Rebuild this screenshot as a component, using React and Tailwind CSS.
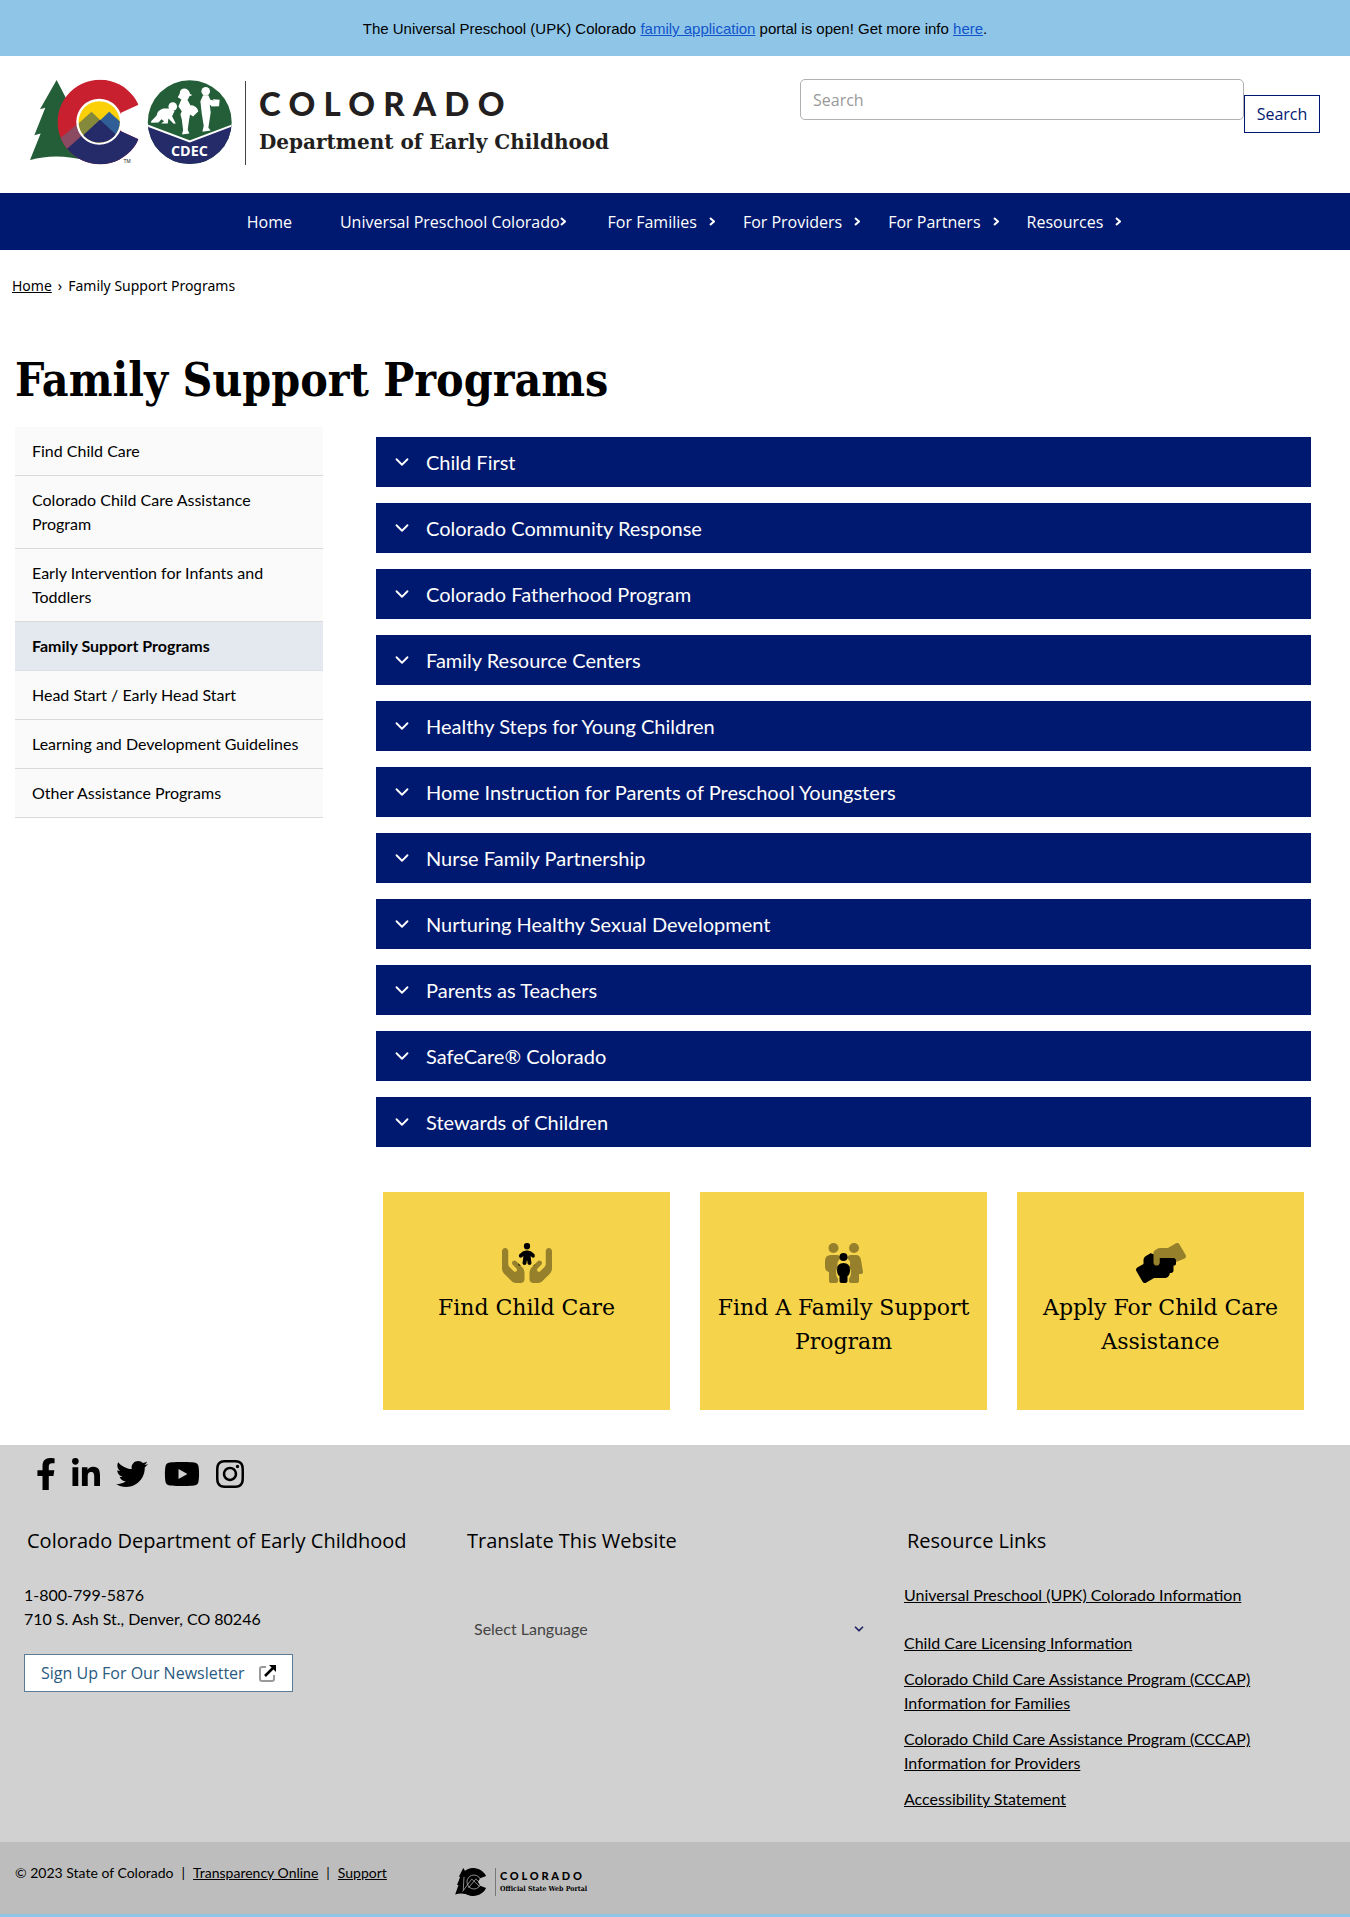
import React from "react";
import { ChevronDown } from "lucide-react";
import {
  FaFacebookF,
  FaLinkedinIn,
  FaTwitter,
  FaYoutube,
  FaInstagram,
} from "react-icons/fa";
import { FaHandsHoldingChild } from "react-icons/fa6";

const NAV = [
  { label: "Home", menu: false, className: "mr-12" },
  { label: "Universal Preschool Colorado", menu: true, className: "mr-[42px]" },
  { label: "For Families", menu: true, className: "mr-7 gap-3" },
  { label: "For Providers", menu: true, className: "mr-7 gap-3" },
  { label: "For Partners", menu: true, className: "mr-7 gap-3" },
  { label: "Resources", menu: true, className: "gap-3" },
];

const SIDEBAR = [
  "Find Child Care",
  "Colorado Child Care Assistance Program",
  "Early Intervention for Infants and Toddlers",
  "Family Support Programs",
  "Head Start / Early Head Start",
  "Learning and Development Guidelines",
  "Other Assistance Programs",
];

const PROGRAMS = [
  "Child First",
  "Colorado Community Response",
  "Colorado Fatherhood Program",
  "Family Resource Centers",
  "Healthy Steps for Young Children",
  "Home Instruction for Parents of Preschool Youngsters",
  "Nurse Family Partnership",
  "Nurturing Healthy Sexual Development",
  "Parents as Teachers",
  "SafeCare® Colorado",
  "Stewards of Children",
];

const SOCIAL = [
  { name: "Facebook", Icon: FaFacebookF, size: "w-5" },
  { name: "LinkedIn", Icon: FaLinkedinIn, size: "w-7" },
  { name: "Twitter", Icon: FaTwitter, size: "w-8" },
  { name: "YouTube", Icon: FaYoutube, size: "w-9" },
  { name: "Instagram", Icon: FaInstagram, size: "w-7" },
];

function StateLogo() {
  return (
    <svg viewBox="30 30 610 260" className="h-[87px] w-[203px] shrink-0" role="img" aria-label="Colorado CDEC logo">
      <defs>
        <clipPath id="c-shape">
          <path d="M356 107 A127 127 0 1 0 356 210 L305 187 L285 158 L305 130 Z" />
        </clipPath>
        <clipPath id="c-inner">
          <circle cx="238" cy="158" r="62" />
        </clipPath>
        <clipPath id="cdec-circle">
          <circle cx="510" cy="159" r="126" />
        </clipPath>
      </defs>
      <path d="M110 32 L60 120 L76 116 L43 198 L62 193 L30 273 Q110 250 205 276 L240 160 L150 110 Z" fill="#235e38" />
      <g clipPath="url(#c-shape)">
        <rect x="100" y="20" width="270" height="270" fill="#c8202f" />
        <path d="M215 130 L110 216 L140 244 L240 152 Z" fill="#8c4a62" />
        <path d="M240 152 L138 242 L160 300 L380 300 L380 170 L300 186 Z" fill="#252a68" />
      </g>
      <circle cx="238" cy="158" r="69" fill="#fff" />
      <g clipPath="url(#c-inner)">
        <rect x="170" y="90" width="140" height="140" fill="#fbd008" />
        <path d="M215 128 L160 176 L160 230 L240 230 L240 152 Z" fill="#85893c" />
        <path d="M268 128 L240 154 L260 230 L320 230 L320 175 Z" fill="#2f5f96" />
        <path d="M240 152 L155 230 L325 230 Z" fill="#252a68" />
      </g>
      <text x="311" y="283" fontFamily="Liberation Sans" fontSize="15" fill="#222">TM</text>
      <g clipPath="url(#cdec-circle)">
        <rect x="380" y="30" width="260" height="260" fill="#235e38" />
        <path d="M380 168 L510 218 L640 168 L640 290 L380 290 Z" fill="#252a68" />
        <path d="M380 168 L510 217 L640 168" fill="none" stroke="#fff" strokeWidth="6" />
      </g>
      <text x="509" y="261" textAnchor="middle" fontFamily="Open Sans" fontWeight="700" fontSize="43" fill="#fff">CDEC</text>
      <g fill="#fff">
        <circle cx="459" cy="112" r="13" />
        <path d="M452 118 L430 118 Q412 124 410 140 L394 156 L394 161 L416 160 L425 150 L433 156 L424 163 L444 163 L446 148 L462 164 L468 163 L457 141 L464 126 Z" />
        <path d="M480 73 Q480 58 495 58 Q508 60 511 74 L518 77 L508 82 Q506 94 496 94 L486 92 L474 84 Z" />
        <path d="M485 90 L503 92 L512 108 Q530 108 536 126 L520 142 L511 136 L508 152 L504 182 L509 193 L487 196 L490 182 L486 150 L482 136 L486 126 L476 112 Z" />
        <circle cx="558" cy="66" r="13" />
        <path d="M550 78 L566 78 L572 92 L582 94 L579 90 L600 92 L598 111 L576 112 L570 106 L573 130 L566 176 L573 184 L548 188 L552 170 L546 132 L542 96 Z" />
      </g>
    </svg>
  );
}

function PortalLogo() {
  return (
    <svg viewBox="0 0 86 76" className="h-[28px] w-[34px] shrink-0" aria-hidden="true">
      <path d="M22 0 L10 24 L14 24 L5 46 L9 46 L0 72 Q18 66 40 74 L50 40 L34 20 Z" />
      <path d="M84 22 A38 38 0 1 0 84 54 L68 48 L62 38 L68 28 Z" />
      <g fill="none" stroke="#bdbdbd" strokeWidth="2">
        <circle cx="51" cy="38" r="19" />
        <path d="M20 64 L45 30 L66 50 M36 54 L56 30 L70 42 M24 24 L22 60" />
      </g>
    </svg>
  );
}

function CareIcon() {
  return (
    <span className="relative block h-10 w-[50px]" aria-hidden="true">
      <FaHandsHoldingChild className="h-10 w-[50px] text-[#96802b]" />
      <FaHandsHoldingChild className="absolute inset-0 h-10 w-[50px] text-black [clip-path:polygon(34%_0,66%_0,66%_56%,34%_56%)]" />
    </span>
  );
}

function FamilyIcon() {
  return (
    <svg viewBox="0 0 38 40" className="h-10 w-[38px]" aria-hidden="true">
      <g fill="#96802b">
        <circle cx="8.500" cy="5" r="5" />
        <circle cx="29" cy="5" r="5" />
        <path d="M6 12 H12 Q15 12 16 15 Q11 19 13 24 Q9 30 13 36 V38 Q13 40 11 40 H6 Q4 40 4 38 V29 Q0 28 0 24 V18 Q0 12 6 12 Z" />
        <path d="M26 12 H31 Q35 12 36 17 L38 29 Q38 31 35 31 H34 V38 Q34 40 32 40 H26 Q24 40 24 38 V36 Q28 30 24 24 Q27 19 22 15 Q23 12 26 12 Z" />
      </g>
      <circle cx="18.500" cy="14" r="4" />
      <path d="M18.500 20 Q25 20 25 27 Q25 32 22.500 33 V38 Q22.500 40 20.500 40 H16.500 Q14.500 40 14.500 38 V33 Q12 32 12 27 Q12 20 18.500 20 Z" />
    </svg>
  );
}

function AssistIcon() {
  return (
    <svg viewBox="0 0 640 512" className="h-10 w-[50px]" aria-hidden="true">
      <path d="M488 192H336v56c0 39.700-32.300 72-72 72s-72-32.300-72-72V126.400l-64.900 39C107.800 176.900 96 197.800 96 220.200v47.300l-80 46.200C.7 322.500-4.600 342.100 4.300 357.400l80 138.600c8.800 15.300 28.400 20.500 43.700 11.700L231.400 448H368c35.300 0 64-28.700 64-64h16c17.700 0 32-14.300 32-32v-64h8c13.300 0 24-10.700 24-24v-48c0-13.300-10.700-24-24-24z" />
      <path d="M190 130 V330 H345 V185 Z" />
      <path
        fill="#96802b"
        d="M635.700 154.600L555.700 16C546.900.7 527.300-4.500 512 4.300L408.600 64H306.400c-12 0-23.700 3.400-33.900 9.700L239 94.600c-9.400 5.800-15 16.100-15 27.100V248c0 22.100 17.900 40 40 40s40-17.900 40-40v-56h184c13 0 24 11 24 24v28.500l112-46.200c15.300-8.900 20.500-28.400 11.700-43.700z"
      />
    </svg>
  );
}

const CARDS = [
  { title: "Find Child Care", Icon: CareIcon },
  { title: "Find A Family Support Program", Icon: FamilyIcon },
  { title: "Apply For Child Care Assistance", Icon: AssistIcon },
];

function SmallChevron({ className }) {
  return (
    <svg viewBox="0 0 6 9" className={className} fill="none" stroke="currentColor" strokeWidth="2" aria-hidden="true">
      <path d="M1 1 L5 4.500 L1 8" />
    </svg>
  );
}

export default function App() {
  return (
    <div className="bg-white font-['Lato',sans-serif] text-base text-black">
      <div className="bg-[#8fc6e8] pt-[18px] pb-[17px] text-center font-['Liberation_Sans',sans-serif] text-[15px] leading-[21px]">
        The Universal Preschool (UPK) Colorado{" "}
        <a href="#application" className="text-[#1155cc] underline">family application</a> portal is open! Get more info{" "}
        <a href="#info" className="text-[#1155cc] underline">here</a>.
      </div>

      <header className="flex items-start justify-between pt-[23px] pr-[30px] pb-[27px] pl-[30px]">
        <a href="#home" className="flex items-center text-[#231f20]">
          <StateLogo />
          <span className="ml-3 h-[84px] w-px bg-[#444]" />
          <span className="ml-[13px] block">
            <span className="block text-[33px] leading-[38px] font-black tracking-[0.25em]">COLORADO</span>
            <span className="block font-['DejaVu_Serif',serif] text-xl leading-10 font-bold">
              Department of Early Childhood
            </span>
          </span>
        </a>
        <form className="flex w-[520px] items-start font-['Open_Sans',sans-serif]">
          <input
            type="search"
            aria-label="Search"
            placeholder="Search"
            className="h-[41px] min-w-0 flex-1 rounded-[5px] border border-[#b0b0b0] px-3 text-base placeholder:text-[#999]"
          />
          <button type="button" className="mt-4 h-[38px] w-[76px] border border-[#001970] text-base text-[#001970]">
            Search
          </button>
        </form>
      </header>

      <nav className="flex h-[57px] items-center justify-center bg-[#001970] pl-[18px] font-['Open_Sans',sans-serif] text-white">
        {NAV.map(({ label, menu, className }) => (
          <a key={label} href="#nav" className={`flex items-center whitespace-nowrap ${className}`}>
            {label}
            {menu && <SmallChevron className="h-[9px] w-[6px]" />}
          </a>
        ))}
      </nav>

      <div className="flex gap-[6px] px-3 pt-[25px] font-['Noto_Sans',sans-serif] text-sm leading-[22px]">
        <a href="#home" className="underline">Home</a>
        <span>›</span>
        <span>Family Support Programs</span>
      </div>

      <main className="pr-[39px] pb-[35px] pl-[15px]">
        <h1 className="pt-[53px] font-['DejaVu_Serif_Condensed','DejaVu_Serif',serif] text-[46px] leading-[60px] font-bold">
          Family Support Programs
        </h1>
        <div className="mt-[17px] flex items-start">
          <ul className="w-[308px] shrink-0 bg-[#fafafa] leading-6">
            {SIDEBAR.map((item) => (
              <li
                key={item}
                className={
                  item === "Family Support Programs"
                    ? "border-b border-[#dcdfe6] bg-[#e4e8ef] font-bold"
                    : "border-b border-[#dadada]"
                }
              >
                <a href="#program" className="block py-3 pr-4 pl-[17px]">{item}</a>
              </li>
            ))}
          </ul>
          <div className="ml-[53px] min-w-0 flex-1 pt-[10px]">
            <div className="flex flex-col gap-4">
              {PROGRAMS.map((p) => (
                <button
                  key={p}
                  type="button"
                  className="flex h-[50px] items-center gap-[13px] bg-[#001970] pl-[15px] text-left text-xl text-white"
                >
                  <ChevronDown className="size-[22px]" strokeWidth={2} />
                  {p}
                </button>
              ))}
            </div>
            <div className="mt-[45px] grid grid-cols-3 gap-[30px] px-[7px]">
              {CARDS.map(({ title, Icon }) => (
                <a
                  key={title}
                  href="#card"
                  className="flex h-[218px] flex-col items-center gap-2 bg-[#f5d44b] px-3 pt-[51px] text-center font-['DejaVu_Serif',serif] text-[22px] leading-[34px]"
                >
                  <Icon />
                  {title}
                </a>
              ))}
            </div>
          </div>
        </div>
      </main>

      <footer>
        <div className="bg-[#d1d1d1] pr-[6px] pb-[31px] pl-6">
          <div className="flex gap-4 pt-[13px] pl-3">
            {SOCIAL.map(({ name, Icon, size }) => (
              <a key={name} href="#social" aria-label={name}>
                <Icon className={`h-8 ${size}`} />
              </a>
            ))}
          </div>
          <div className="mt-9 grid grid-cols-3 leading-6">
            <section>
              <h2 className="pl-[3px] font-['Open_Sans',sans-serif] text-xl leading-[30px]">
                Colorado Department of Early Childhood
              </h2>
              <p className="mt-[27px]">1-800-799-5876</p>
              <p>710 S. Ash St., Denver, CO 80246</p>
              <a
                href="#newsletter"
                className="mt-[23px] inline-flex h-[38px] items-center gap-[14px] border border-[#5b7c99] bg-white px-4 font-['Open_Sans',sans-serif] text-[#2a5a80]"
              >
                Sign Up For Our Newsletter
                <svg viewBox="0 0 17 17" className="size-[17px]" fill="none" strokeWidth="2" aria-hidden="true">
                  <path d="M7 2 H3 Q1 2 1 4 V14 Q1 16 3 16 H13 Q15 16 15 14 V10" stroke="#999" />
                  <path d="M6 11 L14 3" stroke="#000" strokeWidth="2.500" />
                  <path d="M10 0 H17 V7 Z" fill="#000" />
                </svg>
              </a>
            </section>
            <section>
              <h2 className="pl-[3px] font-['Open_Sans',sans-serif] text-xl leading-[30px]">Translate This Website</h2>
              <div className="relative mt-[53px] mr-[30px] ml-[10px] text-[#444]">
                <select aria-label="Select Language" className="h-10 w-full appearance-none bg-transparent">
                  <option>Select Language</option>
                </select>
                <ChevronDown className="pointer-events-none absolute top-[13px] right-2 size-[14px] text-[#222266]" strokeWidth={3} />
              </div>
            </section>
            <section>
              <h2 className="pl-[3px] font-['Open_Sans',sans-serif] text-xl leading-[30px]">Resource Links</h2>
              <ul className="mt-[27px] flex flex-col gap-3 pr-12 underline">
                <li className="mb-3"><a href="#upk">Universal Preschool (UPK) Colorado Information</a></li>
                <li><a href="#licensing">Child Care Licensing Information</a></li>
                <li><a href="#families">Colorado Child Care Assistance Program (CCCAP) Information for Families</a></li>
                <li><a href="#providers">Colorado Child Care Assistance Program (CCCAP) Information for Providers</a></li>
                <li><a href="#accessibility">Accessibility Statement</a></li>
              </ul>
            </section>
          </div>
        </div>
        <div className="flex items-start border-b-[3px] border-[#8fc6e8] bg-[#bdbdbd] pt-5 pb-[18px] pl-[15px] text-sm leading-[22px]">
          <p className="flex w-[439px] gap-2">
            <span>© 2023 State of Colorado</span>
            <span>|</span>
            <a href="#transparency" className="underline">Transparency Online</a>
            <span>|</span>
            <a href="#support" className="underline">Support</a>
          </p>
          <a href="#portal" className="mt-[6px] flex items-center">
            <PortalLogo />
            <span className="ml-[7px] h-[28px] w-px bg-[#777]" />
            <span className="ml-1 block">
              <span className="block text-[11px] leading-[14px] font-black tracking-[0.25em]">COLORADO</span>
              <span className="block font-['DejaVu_Serif_Condensed','DejaVu_Serif',serif] text-[7px] leading-3 font-bold">
                Official State Web Portal
              </span>
            </span>
          </a>
        </div>
      </footer>
    </div>
  );
}
